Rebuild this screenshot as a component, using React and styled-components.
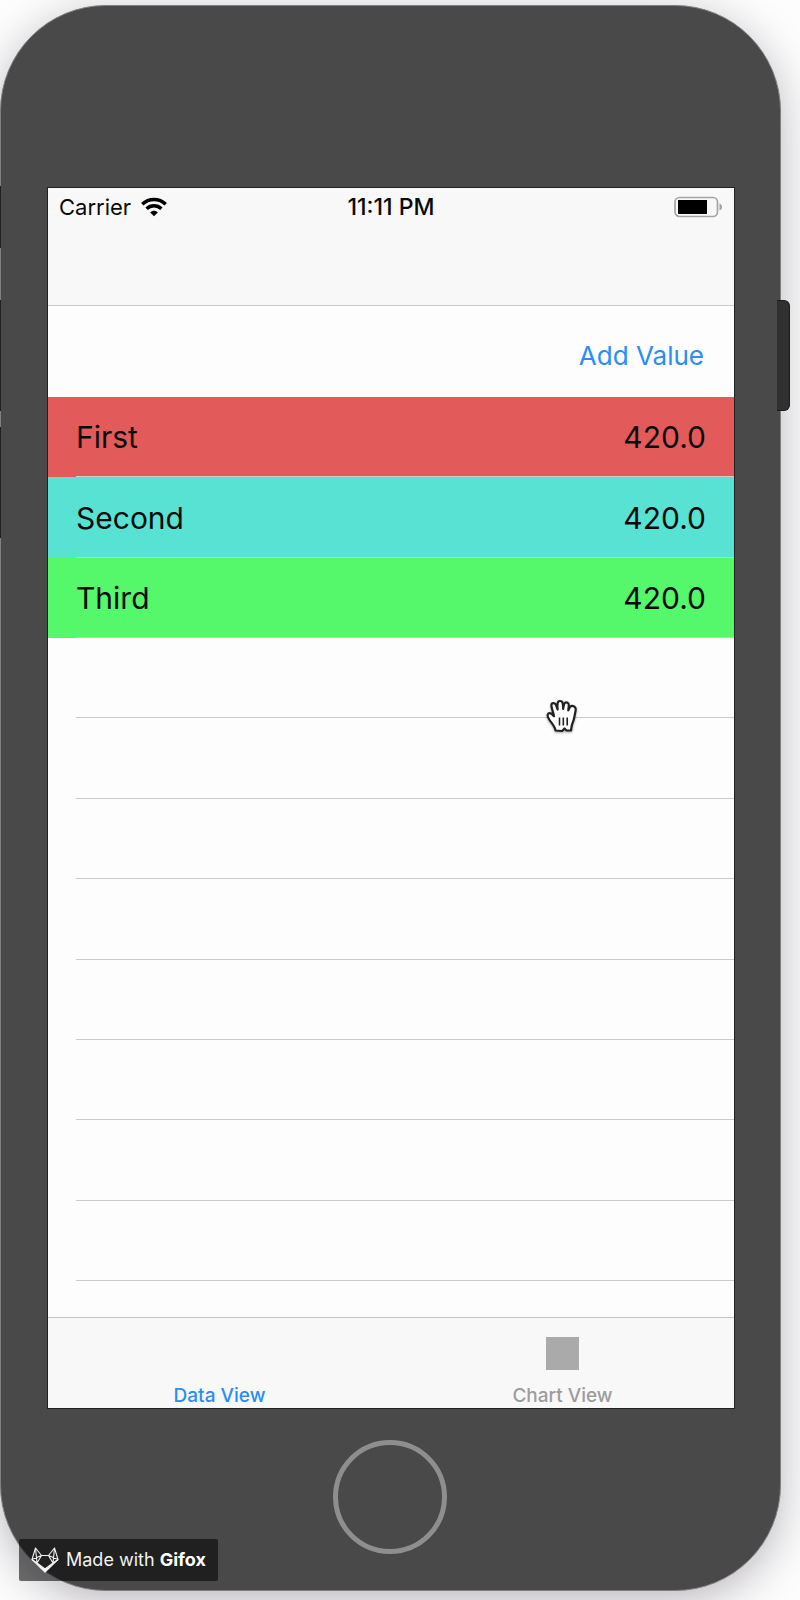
import React, { useState } from "react";
import styled, { createGlobalStyle } from "styled-components";

const GlobalStyle = createGlobalStyle`
  *, *::before, *::after { box-sizing: border-box; }
  body { margin: 0; background: #fdfdfd; font-family: Inter, "Liberation Sans", sans-serif; color: #0a0a0a; }
  button { font: inherit; border: 0; padding: 0; background: none; cursor: pointer; }
`;

const Stage = styled.div`
  position: relative;
  display: flex;
  min-height: 100vh;
  padding: 5px 19px 9px 0;
  overflow: hidden;
`;

const Phone = styled.div`
  position: relative;
  flex: 1;
  min-width: 0;
  display: flex;
  flex-direction: column;
  padding: 182px 46px 0 47px;
  border: 1px solid #808080;
  border-radius: 106px;
  background: #494949;
  box-shadow: 0 10px 44px rgba(30, 20, 40, 0.3);
`;

const SideKey = styled.span`
  position: absolute;
  top: ${(p) => p.$top}px;
  left: -1px;
  width: 1px;
  height: ${(p) => p.$height}px;
  background: #202020;
`;

const PowerKey = styled.span`
  position: absolute;
  top: 294px;
  right: -10px;
  width: 13px;
  height: 111px;
  border: 1px solid #1c1c1c;
  border-left: 0;
  border-radius: 0 6px 6px 0;
  background: #303030;
`;

const Screen = styled.main`
  flex: 1;
  display: flex;
  flex-direction: column;
  background: #fdfdfd;
  outline: 1px solid #222;
`;

const Header = styled.header`
  height: 118px;
  padding: 5px 11px;
  border-bottom: 1px solid #c9c9cb;
  background: #f8f8f8;
`;

const StatusBar = styled.div`
  display: grid;
  grid-template-columns: 1fr auto 1fr;
  align-items: center;
  height: 28px;
  font-size: 22px;
  line-height: 28px;
`;

const Carrier = styled.span`
  display: flex;
  align-items: center;
  gap: 10px;
`;

const Clock = styled.time`
  font-size: 23px;
  font-weight: 500;
`;

const BatteryIcon = styled.svg`
  justify-self: end;
`;

const Toolbar = styled.div`
  display: flex;
  justify-content: flex-end;
  align-items: center;
  height: 91px;
  padding: 8px 30px 0;
`;

const AddButton = styled.button`
  color: #2a8df8;
  font-size: 26px;
  line-height: 36px;
`;

const List = styled.ul`
  position: relative;
  flex: 1;
  display: flex;
  flex-direction: column;
  margin: 0;
  padding: 0 0 36px;
  list-style: none;
`;

const Row = styled.li`
  position: relative;
  flex: 1;
  min-height: 60px;
  display: flex;
  justify-content: space-between;
  align-items: center;
  padding: 0 28px;
  background: ${(p) => p.$color || "transparent"};
  font-size: 30px;
  line-height: 40px;

  &::after {
    content: "";
    position: absolute;
    left: 28px;
    right: 0;
    bottom: 0;
    height: 1px;
    background: #cbcbcd;
  }
`;

const HandCursor = styled.svg`
  position: absolute;
  top: 302px;
  left: 497px;
  filter: drop-shadow(0 1px 1px rgba(0, 0, 0, 0.35));
`;

const TabBar = styled.nav`
  display: flex;
  height: 91px;
  border-top: 1px solid #c5c5c6;
  background: #f8f8f8;
`;

const Tab = styled.button`
  flex: 1;
  display: flex;
  flex-direction: column;
  align-items: center;
  justify-content: flex-end;
  gap: 14px;
  color: ${(p) => (p.$active ? "#2a8df8" : "#9c9c9c")};
  font-size: 19px;
  font-weight: 500;
  line-height: 24px;
`;

const TabIcon = styled.span`
  width: 33px;
  height: 33px;
  background: #aaa;
`;

const TabLabel = styled.span``;

const Chin = styled.div`
  display: flex;
  justify-content: center;
  height: 182px;
  padding: 32px 2px 0 0;
`;

const HomeButton = styled.button`
  width: 114px;
  height: 114px;
  border: 5px solid #8e8e8e;
  border-radius: 50%;
`;

const Badge = styled.a`
  position: absolute;
  left: 19px;
  bottom: 19px;
  display: flex;
  align-items: center;
  gap: 7px;
  height: 42px;
  width: 199px;
  padding-left: 12px;
  border-radius: 2px;
  background: rgba(0, 0, 0, 0.56);
  color: #f2f2f2;
  font-size: 18px;
  line-height: 24px;
  text-decoration: none;
  white-space: nowrap;

  strong {
    color: #fff;
    font-weight: 700;
  }
`;

const rows = [
  { name: "First", value: "420.0", color: "#e35a5a" },
  { name: "Second", value: "420.0", color: "#57e2d4" },
  { name: "Third", value: "420.0", color: "#55f76b" },
];
const emptyRows = Array.from({ length: 8 }, (_, i) => i);

export default function App() {
  const [tab, setTab] = useState("Data View");
  return (
    <>
      <GlobalStyle />
      <Stage>
        <Phone>
          <SideKey $top={180} $height={62} />
          <SideKey $top={294} $height={111} />
          <SideKey $top={421} $height={111} />
          <PowerKey />
          <Screen>
            <Header>
              <StatusBar>
                <Carrier>
                  Carrier
                  <svg width="26" height="20" viewBox="0 0 26 20" fill="none" stroke="#000" strokeWidth="3.4" role="img" aria-label="Wi-Fi">
                    <path d="M1.3 7.3C7.8.8 18.2.8 24.7 7.3" />
                    <path d="M5.6 11.8c4.1-4 10.7-4 14.8 0" />
                    <path d="M13 19.2l-3.8-3.8c2.1-2.1 5.5-2.1 7.6 0z" fill="#000" stroke="none" />
                  </svg>
                </Carrier>
                <Clock>11:11 PM</Clock>
                <BatteryIcon width="49" height="22" viewBox="0 0 49 22" role="img" aria-label="Battery">
                  <rect x="1" y="1.5" width="42.5" height="19" rx="4.5" fill="none" stroke="#a2a5a3" strokeWidth="1.7" />
                  <rect x="4" y="4" width="29" height="14" fill="#000" />
                  <path d="M45.5 7.5c3.4 1 3.4 6 0 7z" fill="#a2a5a3" />
                </BatteryIcon>
              </StatusBar>
            </Header>
            <Toolbar>
              <AddButton type="button">Add Value</AddButton>
            </Toolbar>
            <List>
              {rows.map((r) => (
                <Row key={r.name} $color={r.color}>
                  <span>{r.name}</span>
                  <span>{r.value}</span>
                </Row>
              ))}
              {emptyRows.map((i) => (
                <Row key={i} aria-hidden="true" />
              ))}
              <HandCursor width="36" height="38" viewBox="0 0 36 38" aria-hidden="true">
                <path
                  d="M10.5 31.5C10 27 6.500 24 4.200 20.500C2.700 18 1.800 16 3.200 14.700C5 13.500 7 14.700 9 17.200C8.300 13 6.300 9 6.400 6.200C6.600 3.600 9.800 3.300 11 6L12.600 10.500C12.500 7 11.700 3.300 13.800 2.300C16 1.400 17.600 2.700 17.800 5L18.200 9.800C18.600 6.500 18.900 3.300 21.100 3.300C23.300 3.300 24 5 23.700 7.500L23.300 11.300C24.300 9 25 6.600 27.300 6.900C30.600 7.300 31 9.500 30.500 12C30 14.500 29.600 17 28.900 20C28.200 23 27 25 26.600 27.500L26 31.500L21.600 31.500L19.500 29.500L17.200 32Z"
                  fill="#fff"
                  stroke="#222"
                  strokeWidth="2.2"
                  strokeLinejoin="round"
                />
                <path d="M14.5 18.500v8M18.300 18.500v8M22.200 18.500v8" stroke="#222" strokeWidth="1.600" />
              </HandCursor>
            </List>
            <TabBar>
              <Tab type="button" $active={tab === "Data View"} onClick={() => setTab("Data View")}>
                <TabLabel>Data View</TabLabel>
              </Tab>
              <Tab type="button" $active={tab === "Chart View"} onClick={() => setTab("Chart View")}>
                <TabIcon />
                <TabLabel>Chart View</TabLabel>
              </Tab>
            </TabBar>
          </Screen>
          <Chin>
            <HomeButton type="button" aria-label="Home" />
          </Chin>
        </Phone>
        <Badge href="#gifox">
          <svg width="28" height="26" viewBox="0 0 28 26" fill="none" stroke="#f2f2f2" strokeWidth="1.1" strokeLinejoin="round" aria-hidden="true">
            <path d="M4.500 1L10.500 8.500H17.500L23.500 1L27 12.500L14 25L1 12.500Z" />
            <path d="M4.500 1L6 16L14 22L22 16L23.500 1M10.500 8.500L1 12.500M17.500 8.500L27 12.500M10.500 8.500L6 16L1 12.500M17.500 8.500L22 16L27 12.500M6 16L11 22M22 16L17 22" />
            <path d="M10.500 20.500L14 22L17.500 20.500L14 25Z" fill="#fff" />
          </svg>
          <span>
            Made with <strong>Gifox</strong>
          </span>
        </Badge>
      </Stage>
    </>
  );
}
